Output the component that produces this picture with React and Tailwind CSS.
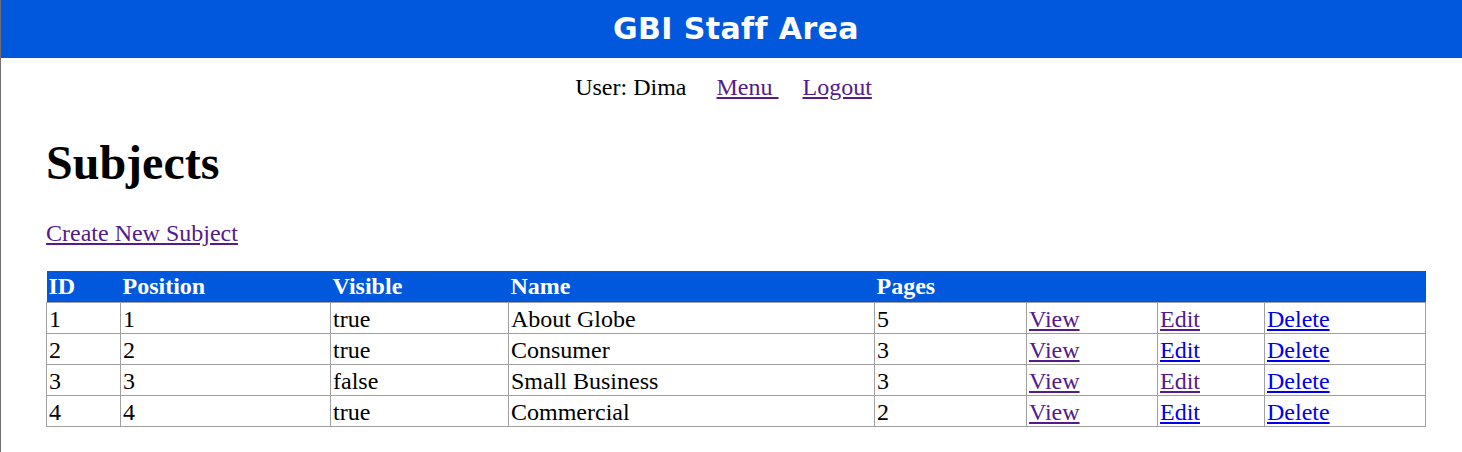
import React from 'react'

// ── Data ──────────────────────────────────────────────────────────────────────
const subjects = [
  { id: 1, position: 1, visible: 'true', name: 'About Globe', pages: 5, editVisited: true },
  { id: 2, position: 2, visible: 'true', name: 'Consumer', pages: 3, editVisited: false },
  { id: 3, position: 3, visible: 'false', name: 'Small Business', pages: 3, editVisited: true },
  { id: 4, position: 4, visible: 'true', name: 'Commercial', pages: 2, editVisited: false },
]

const visited = 'text-[#551a8b] underline'
const fresh = 'text-[#0000ee] underline'

// ── Table row ─────────────────────────────────────────────────────────────────
function SubjectRow({ s }) {
  const td = 'border border-[#a0a0a0] px-[2px] pt-[3px] pb-0 h-[31px] align-top whitespace-nowrap'
  return (
    <tr>
      <td className={td}>{s.id}</td>
      <td className={td}>{s.position}</td>
      <td className={td}>{s.visible}</td>
      <td className={td}>{s.name}</td>
      <td className={td}>{s.pages}</td>
      <td className={td}><a href="#" className={visited}>View</a></td>
      <td className={td}><a href="#" className={s.editVisited ? visited : fresh}>Edit</a></td>
      <td className={td}><a href="#" className={fresh}>Delete</a></td>
    </tr>
  )
}

export default function App() {
  const th = 'text-left font-bold px-[2px] py-0 h-[31px] align-middle'
  return (
    <div
      className="min-h-[452px] border-l border-[#707070] bg-white text-black text-[24px] leading-[normal]"
      style={{ fontFamily: '"Liberation Serif", "Times New Roman", serif' }}
    >
      {/* Header */}
      <header className="h-[58px] bg-[#0158dc] flex items-center justify-center">
        <h1
          className="text-white font-bold text-[30px] tracking-[0.4px] leading-none pl-[9px]"
          style={{ fontFamily: '"DejaVu Sans", Verdana, sans-serif' }}
        >
          GBI Staff Area
        </h1>
      </header>

      {/* User nav */}
      <nav className="mt-[16px] flex justify-center pr-[16px]">
        <span>User: Dima</span>
        <a href="#" className={`${visited} ml-[30px]`}>Menu&nbsp;</a>
        <a href="#" className={`${visited} ml-[24px]`}>Logout</a>
      </nav>

      {/* Content */}
      <main className="px-[45px]">
        <h2 className="mt-[34px] text-[48px] font-bold">Subjects</h2>

        <div className="mt-[30px]">
          <a href="#" className={visited}>Create New Subject</a>
        </div>

        <table className="mt-[24px] w-[1379px] table-fixed border-collapse">
          <colgroup>
            <col className="w-[74px]" />
            <col className="w-[210px]" />
            <col className="w-[178px]" />
            <col className="w-[366px]" />
            <col className="w-[152px]" />
            <col className="w-[131px]" />
            <col className="w-[107px]" />
            <col className="w-[161px]" />
          </colgroup>
          <thead>
            <tr className="bg-[#0158dc] text-white">
              <th className={th}>ID</th>
              <th className={th}>Position</th>
              <th className={th}>Visible</th>
              <th className={th}>Name</th>
              <th className={th}>Pages</th>
              <th className={th}>&nbsp;</th>
              <th className={th}>&nbsp;</th>
              <th className={th}>&nbsp;</th>
            </tr>
          </thead>
          <tbody>
            {subjects.map(s => <SubjectRow key={s.id} s={s} />)}
          </tbody>
        </table>
      </main>
    </div>
  )
}
